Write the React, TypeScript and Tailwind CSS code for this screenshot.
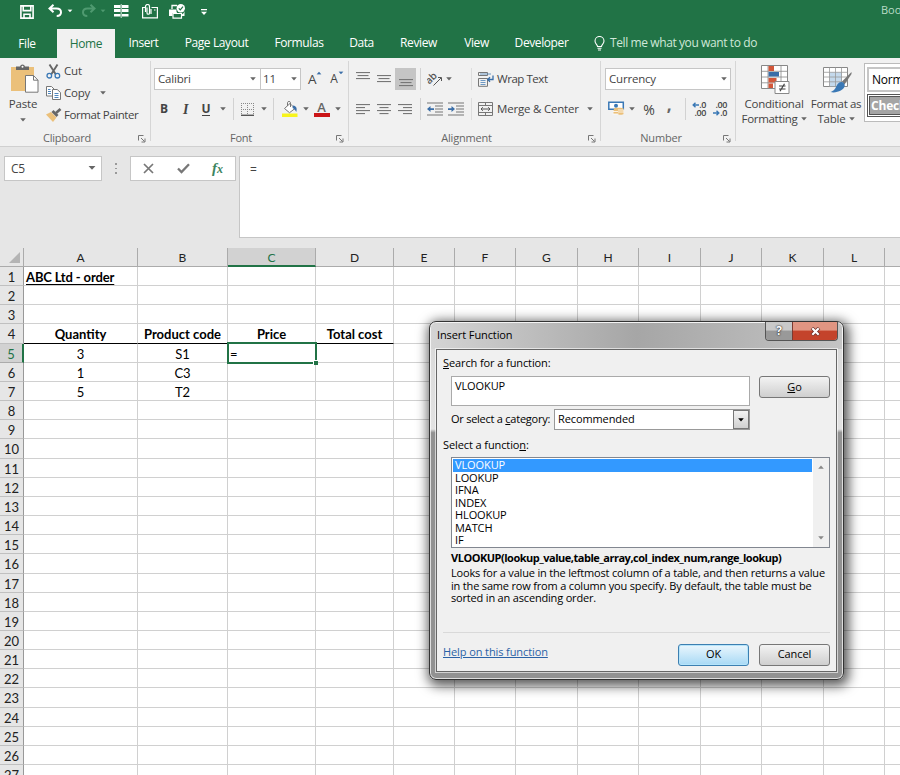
import type { ReactNode } from "react";

// Spreadsheet window: title bar, ribbon, formula bar, grid and the
// Insert Function dialog floating over the cells.

const TABS = [
  { label: "Insert", cls: "w-[57px]" },
  { label: "Page Layout", cls: "w-[89px]" },
  { label: "Formulas", cls: "w-[76px]" },
  { label: "Data", cls: "w-[49px]" },
  { label: "Review", cls: "w-[65px]" },
  { label: "View", cls: "w-[51px]" },
  { label: "Developer", cls: "w-[79px]" },
];

const COLS = ["A", "B", "C", "D", "E", "F", "G", "H", "I", "J", "K", "L", ""];
const GRID =
  "grid grid-rows-[100%] grid-cols-[24px_114px_90px_88px_78px_61px_61px_62px_61px_62px_61px_62px_61px_61px]";

const CELLS: Record<number, string[]> = {
  1: ["ABC Ltd - order"],
  4: ["Quantity", "Product code", "Price", "Total cost"],
  5: ["3", "S1", "="],
  6: ["1", "C3"],
  7: ["5", "T2"],
};

const FUNCTIONS = ["VLOOKUP", "LOOKUP", "IFNA", "INDEX", "HLOOKUP", "MATCH", "IF"];

/* ── small shared pieces ── */

function Caret({ className = "", color = "text-[#666]" }: { className?: string; color?: string }) {
  return (
    <svg width="6" height="4" viewBox="0 0 6 4" className={`shrink-0 ${color} ${className}`}>
      <path d="M.2.3h5.600L3 3.400z" fill="currentColor" />
    </svg>
  );
}

function Slot({ w, children }: { w: string; children?: ReactNode }) {
  return <div className={`flex h-full shrink-0 items-center justify-center ${w}`}>{children}</div>;
}

function Rule() {
  return <div className="h-[22px] w-px shrink-0 bg-[#d2d2d2]" />;
}

function Group({ label, w, children, center = "" }: { label: string; w: string; center?: string; children: ReactNode }) {
  return (
    <section className={`flex h-[88px] shrink-0 flex-col ${w}`}>
      <div className="flex h-[72px] min-w-0">
        <div className="min-w-0 flex-1">{children}</div>
        <div className="mt-[3px] h-[80px] w-px bg-[#d6d6d6]" />
      </div>
      <div className="flex h-[16px] items-center pr-[5px]">
        <span className={`flex-1 text-center text-[11px] text-[#666] ${center}`}>{label}</span>
        <svg width="8" height="8" viewBox="0 0 8 8" fill="none" stroke="#777" className="mt-[2px]">
          <path d="M.5 5.500v-5h5M3 3l3.500 3.500M7 3.500V7H3.500" />
        </svg>
      </div>
    </section>
  );
}

function Lines({ widths, align, top }: { widths: number[]; align: "l" | "c" | "r"; top: number }) {
  return (
    <svg width="14" height="16" viewBox="0 0 14 16" fill="#777">
      {widths.map((w, i) => (
        <rect key={i} x={align === "l" ? 0 : align === "c" ? (14 - w) / 2 : 14 - w} y={top + i * 3} width={w} height="1.1" />
      ))}
    </svg>
  );
}

function Indent({ flip = false }: { flip?: boolean }) {
  return (
    <svg width="16" height="14" viewBox="0 0 16 14">
      <path d="M0 1h16M8 4h8M8 7h8M8 10h8M0 13h16" stroke="#777" strokeWidth="1.1" />
      <path
        d={flip ? "M0 6.200h3.500V4L7 7.100 3.500 10V8H0z" : "M7 6.200H3.500V4L0 7.100 3.500 10V8H7z"}
        fill="#3a6ea8"
      />
    </svg>
  );
}

/* ── title bar ── */

function TitleBar() {
  return (
    <div className="flex h-[28px] items-start text-white [&>*]:shrink-0">
      <svg width="14" height="14" viewBox="0 0 14 14" fill="none" stroke="currentColor" strokeWidth="1.600" className="mt-[5px] ml-[20px]">
        <path d="M.9.9h12.200v12.200H.9zM3.200 1v4.600h7.600V1M4 13V9.200h6V13" />
      </svg>
      <svg width="15" height="14" viewBox="0 0 15 14" fill="none" stroke="currentColor" strokeWidth="2" className="mt-[4px] ml-[14px]">
        <path d="M5.500.8 1.500 4.500l4 3.700M2 4.500h6.500c3 0 4.500 1.500 4.500 3.800 0 2.200-1.400 3.700-4.300 3.700" />
      </svg>
      <Caret color="" className="mt-[9px] ml-[4px] scale-90" />
      <svg width="15" height="14" viewBox="0 0 15 14" fill="none" stroke="#4f9a70" strokeWidth="2" className="mt-[4px] ml-[8px]">
        <path d="m9.500.8 4 3.700-4 3.700M13 4.500H6.500C3.500 4.500 2 6 2 8.300 2 10.500 3.400 12 6.300 12" />
      </svg>
      <Caret color="text-[#4f9a70]" className="mt-[9px] ml-[4px] scale-90" />
      <svg width="15" height="14" viewBox="0 0 15 14" fill="currentColor" className="mt-[4px] ml-[8px]">
        <path d="M0 1h6.500v3H0zM0 5h6.500v3H0zM0 10h6.500v2.500H0zM8 1h6.500v3H8zM8 5h6.500v3H8zM8 10h6.500v2.500H8z" />
        <path d="M7.200 0v14" stroke="currentColor" strokeWidth=".8" />
      </svg>
      <svg width="16" height="15" viewBox="0 0 16 15" fill="none" stroke="currentColor" strokeWidth="1.200" className="mt-[4px] ml-[13px]">
        <path d="M3 3.500H.6v10.300h14.800V3.500H9.500" />
        <path d="M3.500 8V2.500a2 2 0 0 1 4 0V9a1.200 1.200 0 0 1-2.500 0V3.500M9 10V5M12 6h1.500" />
      </svg>
      <svg width="17" height="15" viewBox="0 0 17 15" fill="currentColor" className="mt-[4px] ml-[11px]">
        <path d="M0 5.500h7.500A4 4 0 0 0 15.500 7v5H13V9H3.500v3H0z" />
        <path d="M3 5V1.500h5" fill="none" stroke="currentColor" strokeWidth="1.300" />
        <path d="M4 9.500h8.500v4.700H4z" fill="#217346" stroke="currentColor" strokeWidth="1.200" />
        <circle cx="11.800" cy="4.300" r="4.200" />
        <path d="m9.800 4.300 1.500 1.600L14 2.700" fill="none" stroke="#217346" strokeWidth="1.200" />
      </svg>
      <svg width="6" height="7" viewBox="0 0 6 7" fill="currentColor" className="mt-[9px] ml-[15px]">
        <path d="M0 0h6v1.200H0zM0 2.800h6L3 6z" />
      </svg>
      <span className="mt-[2px] ml-[674px] text-[11px] leading-[15px] whitespace-nowrap text-[#b9dcc6]">Book1</span>
    </div>
  );
}

function TabRow() {
  return (
    <nav className="flex h-[30px] items-center text-[12px] tracking-[-0.4px] whitespace-nowrap text-white">
      <div className="w-[57px] pt-px pr-[3px] text-center">File</div>
      <div className="mt-px flex h-[29px] w-[58px] items-center justify-center bg-[#f1f1f1] text-[#217346]">Home</div>
      <div className="flex">
        {TABS.map((t) => (
          <div key={t.label} className={`text-center ${t.cls}`}>{t.label}</div>
        ))}
      </div>
      <svg width="11" height="15" viewBox="0 0 11 15" fill="none" stroke="currentColor" strokeWidth="1.100" className="ml-[13px]">
        <path d="M3.500 10.500c0-2-2.500-2.500-2.500-5.500a4.500 4.500 0 0 1 9 0c0 3-2.500 3.500-2.500 5.500zM3.500 12.300h4M4 14h3" />
      </svg>
      <span className="ml-[5px] text-[#cfe8d8]">Tell me what you want to do</span>
    </nav>
  );
}

/* ── ribbon ── */

function ClipboardGroup() {
  return (
    <Group label="Clipboard" w="w-[151px]" center="pr-[4px]">
      <div className="flex">
        <div className="flex w-[46px] flex-col items-center pt-[6px]">
          <svg width="28" height="29" viewBox="0 0 28 29" className="ml-[3px]">
            <path d="M0 3h23v24H0z" fill="#ebc07a" />
            <path d="M5 6V2.500h4a2.600 2.600 0 0 1 5 0h4V6z" fill="#666" />
            <circle cx="11.500" cy="2.800" r="1" fill="#fff" />
            <path d="M14.500 11.500h8l4.500 4.700v12H14.500z" fill="#fff" stroke="#777" />
            <path d="M22.500 11.500v4.700H27" fill="none" stroke="#777" />
          </svg>
          <span className="mt-[2px] leading-[18px]">Paste</span>
          <Caret className="mt-[5px]" />
        </div>
        <div className="flex flex-col pt-[2px]">
          <div className="flex h-[22px] items-center">
            <svg width="15" height="15" viewBox="0 0 15 15" fill="none" className="mr-[3px]">
              <path d="m3.500.5 6.200 9.700M11.500.5 5.300 10.200" stroke="#666" strokeWidth="1.900" />
              <circle cx="3.300" cy="11.700" r="2.300" stroke="#3a78b5" strokeWidth="1.300" />
              <circle cx="11.400" cy="11.700" r="2.300" stroke="#3a78b5" strokeWidth="1.300" />
            </svg>
            Cut
          </div>
          <div className="flex h-[22px] items-center">
            <svg width="15" height="14" viewBox="0 0 15 14" fill="#fff" stroke="#777" className="mr-[3px]">
              <path d="M.5.500h5l2.500 2.500v7H.5z" />
              <path d="M6.500 3.500h4.700L14.500 6.500v7h-8z" />
              <path d="M2 3.500h2.500M2 5.500h3M2 7.500h3M8.500 7.500h4M8.500 9.500h4M8.500 11.500h4" stroke="#3a78b5" strokeWidth=".9" />
            </svg>
            Copy
            <Caret className="ml-[10px]" />
          </div>
          <div className="flex h-[22px] items-center tracking-[-0.42px] whitespace-nowrap">
            <svg width="16" height="14" viewBox="0 0 16 14" className="mr-[2px]">
              <path d="m0 6.500 5-2.500 5.500 5.500L7 14z" fill="#ebc07a" />
              <path d="m5.500 4 2-2 5 5-2 2z" fill="#666" />
              <path d="m10 5 4.500-4" stroke="#666" strokeWidth="2.600" />
            </svg>
            Format Painter
          </div>
        </div>
      </div>
    </Group>
  );
}

function FontGroup() {
  return (
    <Group label="Font" w="w-[198px]" center="pr-[5px]">
      <div className="mt-[10px] flex h-[22px] items-center pl-[3px]">
        <div className="flex h-[22px] w-[107px] items-center justify-between border border-[#c6c6c6] bg-white pr-[4px] pl-[3px]">
          Calibri <Caret />
        </div>
        <div className="-ml-px flex h-[22px] w-[41px] items-center justify-between border border-[#c6c6c6] bg-white pr-[3px] pl-[2px]">
          11 <Caret />
        </div>
        <div className="flex pl-[7px] text-[13.500px] leading-[20px] text-[#444]">
          A<Caret color="text-[#3a6ea8]" className="mt-[2px] rotate-180 scale-90" />
        </div>
        <div className="flex pl-[8px] text-[12px] leading-[20px] text-[#444]">
          A<Caret color="text-[#3a6ea8]" className="mt-[2px] scale-90" />
        </div>
      </div>
      <div className="mt-[8px] flex h-[22px] items-center text-[12px]">
        <Slot w="w-[26px]"><b>B</b></Slot>
        <Slot w="w-[17px]"><i className="font-[Liberation_Serif] text-[14px] font-bold">I</i></Slot>
        <Slot w="w-[24px]"><b className="border-b border-[#444] leading-[13px]">U</b></Slot>
        <Slot w="w-[9px]"><Caret /></Slot>
        <Slot w="w-[12px]"><Rule /></Slot>
        <Slot w="w-[17px]">
          <svg width="13" height="13" viewBox="0 0 13 13" fill="none" stroke="#888" strokeDasharray="1 1">
            <path d="M0 .5h13M0 6.500h13M.5 0v13M6.500 0v13M12.500 0v13" />
            <path d="M0 12.300h13" stroke="#555" strokeDasharray="none" strokeWidth="1.400" />
          </svg>
        </Slot>
        <Slot w="w-[15px]"><Caret /></Slot>
        <Slot w="w-[5px]"><Rule /></Slot>
        <Slot w="w-[27px]">
          <svg width="16" height="17" viewBox="0 0 16 17" fill="none">
            <path d="M0 12.500h15.500v3.500H0z" fill="#f7f41c" />
            <path d="m8 2.500 5 5-5.500 4.200L2.500 7.500z" fill="#fff" stroke="#777" />
            <path d="M5.500 5V1.500a1.600 1.600 0 0 1 3 0V6" stroke="#777" />
            <path d="M11 4.500c3 .3 4.500 2.500 3.300 6.500-1-2-1.800-3-3.800-4z" fill="#3a6ea8" />
          </svg>
        </Slot>
        <Slot w="w-[5px]"><Caret /></Slot>
        <Slot w="w-[27px]">
          <span className="flex w-[16px] flex-col items-center text-[13px] leading-[13px] font-semibold text-[#666]">
            A<i className="-mt-px h-[4px] w-[16px] bg-[#cb1517]" />
          </span>
        </Slot>
        <Slot w="w-[6px]"><Caret /></Slot>
      </div>
    </Group>
  );
}

function AlignmentGroup() {
  return (
    <Group label="Alignment" w="w-[252px]" center="pr-[4px]">
      <div className="mt-[10px] flex h-[22px] items-center">
        <Slot w="w-[28px]"><Lines widths={[14, 11, 14]} align="c" top={1} /></Slot>
        <Slot w="w-[14px]"><Lines widths={[14, 11, 14]} align="c" top={4} /></Slot>
        <div className="ml-[4px] flex h-[22px] w-[21px] items-center justify-center bg-[#c5c5c5]">
          <Lines widths={[14, 11, 14]} align="c" top={8} />
        </div>
        <Slot w="w-[8px]"><Rule /></Slot>
        <Slot w="w-[22px]">
          <svg width="16" height="16" viewBox="0 0 16 16" fill="none" stroke="#555">
            <text x="-1" y="10" transform="rotate(-45 5 8)" fontSize="10" fontWeight="600" fill="#555" stroke="none">ab</text>
            <path d="m6.500 14.500 7.500-7.500M11 6.500h3.500V10" />
          </svg>
        </Slot>
        <Slot w="w-[6px]"><Caret /></Slot>
        <Slot w="w-[35px]"><div className="ml-[3px] h-[22px] w-px bg-[#ddd]" /></Slot>
        <svg width="16" height="15" viewBox="0 0 16 15" fill="none" stroke="#777" className="mr-[3px] -ml-[9px]">
          <path d="M.5.500h9v3h-9zM.5 6.500h9v7.800h-9z" />
          <path d="M2.500 8.500h5M2.500 10.500h5M2.500 12.500h5M2 2h11" stroke="#5f8fbe" strokeWidth=".9" />
          <path d="M15 3.500v4h-5M12 5.200 9.700 7.500l2.300 2.300" stroke="#3a6ea8" strokeWidth="1.300" />
        </svg>
        <span className="tracking-[-0.45px] whitespace-nowrap">Wrap Text</span>
      </div>
      <div className="mt-[8px] flex h-[22px] items-center">
        <Slot w="w-[28px]"><Lines widths={[14, 9, 14, 9]} align="l" top={3} /></Slot>
        <Slot w="w-[14px]"><Lines widths={[14, 9, 14, 9]} align="c" top={3} /></Slot>
        <Slot w="w-[28px]"><Lines widths={[14, 9, 14, 9]} align="r" top={3} /></Slot>
        <Slot w="w-[3px]"><Rule /></Slot>
        <Slot w="w-[26px]"><Indent /></Slot>
        <Slot w="w-[16px]"><Indent flip /></Slot>
        <Slot w="w-[14px]"><div className="h-[22px] w-px bg-[#ddd]" /></Slot>
        <svg width="15" height="14" viewBox="0 0 15 14" fill="none" stroke="#777" className="mr-[4px]">
          <path d="M.5.500h14v13H.5zM.5 3.500h14M.5 10.500h14M7.500.5v3M7.500 10.500v3" />
          <path d="M3 7h9M4.800 5.200 3 7l1.800 1.800M10.200 5.200 12 7l-1.800 1.800" stroke="#555" />
        </svg>
        <span className="whitespace-nowrap">Merge &amp; Center</span>
        <Caret className="ml-[8px]" />
      </div>
    </Group>
  );
}

function NumberGroup() {
  return (
    <Group label="Number" w="w-[135px]" center="pr-[2px]">
      <div className="mt-[10px] ml-[4px] flex h-[22px] w-[126px] items-center justify-between border border-[#c6c6c6] bg-white pr-[3px] pl-[3px]">
        Currency <Caret />
      </div>
      <div className="mt-[8px] flex h-[22px] items-center">
        <svg width="17" height="16" viewBox="0 0 17 16" className="ml-[7px]">
          <path d="M.8 1.200h14.500v7H.8z" fill="#fff" stroke="#3a78b5" strokeWidth="1.500" />
          <circle cx="8" cy="4.700" r="2" fill="#3a78b5" />
          <path d="M6 7.500c0-1 9.500-1 9.500 0V13c0 1-6 1-6 0h-4v-3z" fill="#ebc07a" />
          <path d="M5 10.500h5M10 9h6M10 11h6M4.500 13h6" stroke="#fff" strokeWidth=".8" />
        </svg>
        <Slot w="w-[14px]"><Caret /></Slot>
        <Slot w="w-[20px]"><span className="text-[14px]">%</span></Slot>
        <Slot w="w-[20px]"><b className="-mt-[9px] text-[17px] leading-[14px] text-[#666] not-italic">,</b></Slot>
        <Slot w="w-[12px]"><Rule /></Slot>
        <div className="w-[15px] text-[9px] leading-[8px] font-semibold tracking-[-0.4px]">
          <div className="flex items-center justify-end">
            <svg width="7" height="6" viewBox="0 0 7 6"><path d="M7 3H2M3.500.8 1.200 3l2.300 2.200" fill="none" stroke="#3a78b5" strokeWidth="1.400" /></svg>.0
          </div>
          <div className="text-right">.00</div>
        </div>
        <div className="ml-[6px] w-[15px] text-[9px] leading-[8px] font-semibold tracking-[-0.4px]">
          <div className="text-right">.00</div>
          <div className="flex items-center justify-end">
            <svg width="7" height="6" viewBox="0 0 7 6"><path d="M0 3h5M3.500.8 5.800 3 3.500 5.200" fill="none" stroke="#3a78b5" strokeWidth="1.400" /></svg>.0
          </div>
        </div>
      </div>
    </Group>
  );
}

function StylesGroup() {
  return (
    <section className="flex min-w-0 flex-1 overflow-hidden">
      <div className="flex w-[76px] shrink-0 flex-col items-center pt-[7px] leading-[15px]">
        <svg width="29" height="29" viewBox="0 0 29 29" className="mb-[2px] ml-[2px]">
          <path d="M.5.500h26v23H.5z" fill="#fff" stroke="#888" />
          <path d="M.5 6.300h26M.5 12h26M.5 17.800h26M7 .5v23M20 .5v23" stroke="#888" strokeWidth=".8" />
          <path d="M7.500 1H13v5H7.500zM7.500 13h8v4.500h-8zM7.500 18.500h4.500V23H7.500z" fill="#d2573a" />
          <path d="M7.500 7H18v4.500H7.500z" fill="#3a6ea8" />
          <path d="M14 16.500h14v12H14z" fill="#fff" stroke="#888" />
          <path d="M18 21h6.500M18 24h6.500M23.500 18.800 19 26.200" stroke="#444" strokeWidth="1.200" />
        </svg>
        <span>Conditional</span>
        <span className="flex items-center gap-[3px] tracking-[-0.3px]">Formatting <Caret /></span>
      </div>
      <div className="flex w-[48px] shrink-0 flex-col items-center pt-[7px] leading-[15px] whitespace-nowrap">
        <svg width="29" height="29" viewBox="0 0 29 29" className="mb-[2px] ml-[2px]">
          <path d="M.5 2.500h24v19H.5z" fill="#fff" stroke="#888" />
          <path d="M6.500 7.300h12.500v14H6.500z" fill="#c4d9ec" />
          <path d="M.5 7.300h24M.5 12h24M.5 16.800h24M6.500 2.500v19M12.500 2.500v19M18.500 2.500v19" stroke="#999" strokeWidth=".8" />
          <path d="m28.500 7-9.500 9.500 2.500 3L28.500 9z" fill="#777" />
          <path d="M18.500 17c2 0 3.500 1.800 3.200 3.800C21 25.500 13 28.500 7.500 27c4-1.500 4.500-3 6-6 1-2 2.500-4 5-4z" fill="#3a78b5" />
        </svg>
        <span className="tracking-[-0.35px]">Format as</span>
        <span className="flex items-center gap-[3px]">Table <Caret /></span>
      </div>
      <div className="mt-[5px] ml-[4px] h-[59px] w-[60px] shrink-0 border border-[#bbb] bg-white pt-[3px] pl-[2px]">
        <div className="flex h-[25px] w-[70px] items-center border-2 border-[#c6c6c6] pl-[3px] text-[12px] text-black">Normal</div>
        <div className="mt-[2px] w-[70px] border border-[#555] p-px">
          <div className="flex h-[19px] items-center border border-[#555] bg-[#a5a5a5] pl-px text-[12px] font-bold text-white">Check Cell</div>
        </div>
      </div>
    </section>
  );
}

/* ── formula bar ── */

function FormulaBar() {
  return (
    <div className="flex h-[101px] bg-[#e6e6e6] pt-[9px] text-[#444]">
      <div className="ml-[4px] flex h-[25px] w-[98px] items-center justify-between border border-[#c6c6c6] bg-white pr-[6px] pl-[6px] text-[12px] tracking-[-0.3px]">
        C5 <Caret className="mb-[2px] scale-125" />
      </div>
      <div className="flex h-[25px] w-[28px] flex-col items-center justify-center gap-[3px]">
        <i className="size-[1.500px] bg-[#999]" />
        <i className="size-[1.500px] bg-[#999]" />
        <i className="size-[1.500px] bg-[#999]" />
      </div>
      <div className="flex h-[25px] w-[106px] items-center border border-[#c6c6c6] bg-white">
        <svg width="11" height="11" viewBox="0 0 11 11" fill="none" stroke="#777" strokeWidth="1.700" className="ml-[12px]">
          <path d="m1 1 9 9M10 1l-9 9" />
        </svg>
        <svg width="13" height="11" viewBox="0 0 13 11" fill="none" stroke="#777" strokeWidth="2.300" className="ml-[23px]">
          <path d="m1 5.500 3.500 3.500L12 1.200" />
        </svg>
        <span className="ml-[22px] font-[Liberation_Serif] text-[15px] leading-[16px] font-bold text-[#3c8560] italic">
          f<span className="text-[12px]">x</span>
        </span>
      </div>
      <div className="ml-[3px] h-[82px] flex-1 border border-r-0 border-[#c6c6c6] bg-white pt-[4px] pl-[10px] text-[12px]">=</div>
    </div>
  );
}

/* ── sheet ── */

function Sheet() {
  return (
    <div className="w-[945px] font-[Lato,Carlito,sans-serif] text-[13px] text-black">
      <div className={`${GRID} h-[19px]`}>
        <div className="flex items-end justify-end border-r border-b border-[#ababab] bg-[#e6e6e6] pr-[3px] pb-[3px]">
          <svg width="11" height="11" viewBox="0 0 11 11"><path d="M11 0v11H0z" fill="#b4b4b4" /></svg>
        </div>
        {COLS.map((c, i) => (
          <div
            key={i}
            className={
              c === "C"
                ? "border-r border-b-2 border-r-[#ababab] border-b-[#217346] bg-[#d2d2d2] text-center text-[12px] leading-[19px] text-[#217346]"
                : "border-r border-b border-[#ababab] bg-[#e6e6e6] text-center text-[12px] leading-[19px] text-[#222]"
            }
          >
            {c}
          </div>
        ))}
      </div>
      {Array.from({ length: 27 }, (_, i) => i + 1).map((row) => (
        <div key={row} className={`${GRID} h-[19.170px]`}>
          <div
            className={
              row === 5
                ? "border-r-2 border-b border-r-[#217346] border-b-[#ababab] bg-[#d2d2d2] text-center leading-[21px] text-[#217346]"
                : "border-r border-b border-r-[#999] border-b-[#c0c0c0] bg-[#e6e6e6] text-center leading-[21px] text-[#222]"
            }
          >
            {row}
          </div>
          {COLS.map((_, c) => {
            const text = CELLS[row]?.[c];
            const line = row === 4 && c < 4 ? "border-b-black" : "border-b-[#d0d0d0]";
            const face = row === 1 || row === 4 ? "font-bold" : "";
            const side = row === 1 ? "pl-[2px] text-left tracking-[-0.13px]" : "text-center";
            return (
              <div key={c} className={`relative border-r border-b border-r-[#d0d0d0] leading-[21px] whitespace-nowrap ${line} ${face} ${side}`}>
                {row === 5 && c === 2 ? (
                  <div className="absolute -top-[2px] -right-[2px] -bottom-[2px] -left-px z-10 border-2 border-[#217346] pl-px text-left leading-[20px]">
                    {text}
                    <i className="absolute -right-[3px] -bottom-[3px] size-[5px] border-t border-l border-white bg-[#217346]" />
                  </div>
                ) : row === 1 && text ? (
                  <span className="underline decoration-1 underline-offset-2">{text}</span>
                ) : (
                  text
                )}
              </div>
            );
          })}
        </div>
      ))}
    </div>
  );
}

/* ── dialog ── */

const BUTTON = "flex h-[22px] w-[71px] items-center justify-center rounded-[3px] border bg-linear-to-b";

function InsertFunctionDialog() {
  return (
    <div className="absolute top-[321px] left-[429px] z-20 flex h-[359px] w-[415px] flex-col rounded-[7px] border-[1.500px] border-[#333] bg-linear-to-b from-[#d8d8d8] from-0% via-[#e2e2e2] via-[30%] to-[#929292] to-[31%] px-[6px] pb-[7px] text-[11px] tracking-[-0.1px] text-black shadow-[2px_3px_12px_3px_rgba(0,0,0,0.65),inset_0_0_0_1px_rgba(255,255,255,0.7)]">
      <div className="-mx-[5px] mt-px flex h-[26px] shrink-0 justify-between rounded-t-[5px] bg-linear-to-r from-[#d4d4d4] via-[#a6a6a6] via-50% to-[#c4c4c4] pl-[6px]">
        <span className="pt-[4px] leading-[15px]">Insert Function</span>
        <div className="mr-[4px] -mt-px flex h-[19px] rounded-b-[4px] border border-t-0 border-[#555] text-[12px] font-bold text-white">
          <div className="flex w-[26px] items-center justify-center rounded-bl-[3px] bg-linear-to-b from-[#c9c9c9] from-45% to-[#999] to-50% [text-shadow:0_0_2px_#222,0_0_1px_#222]">?</div>
          <div className="flex w-[45px] items-center justify-center rounded-br-[3px] border-l border-[#7c3a30] bg-linear-to-b from-[#e09582] from-45% to-[#c4432b] to-50%">
            <svg width="11" height="9" viewBox="0 0 11 9" fill="none">
              <path d="m2 1 7 7M9 1 2 8" stroke="#6b2d26" strokeWidth="3.600" />
              <path d="m2.300 1.300 6.400 6.400M8.700 1.300 2.300 7.700" stroke="#fff" strokeWidth="2.200" />
            </svg>
          </div>
        </div>
      </div>

      <div className="flex min-h-0 flex-1 flex-col border border-[#666] bg-[#f0f0f0] px-[6px] shadow-[0_0_0_1px_rgba(255,255,255,0.6)]">
        <div className="mt-[5px] leading-[15px]"><u>S</u>earch for a function:</div>
        <div className="mt-[6px] ml-[8px] flex justify-between">
          <div className="h-[30px] w-[299px] border border-[#aaa] bg-white pl-[3px] leading-[17px]">VLOOKUP</div>
          <button className={`${BUTTON} border-[#777] from-[#f3f3f3] to-[#cfcfcf]`}><u>G</u>o</button>
        </div>
        <div className="mt-[3px] ml-[8px] flex h-[21px] items-center">
          <span className="w-[103px] tracking-[-0.25px] whitespace-nowrap">Or select a <u>c</u>ategory:</span>
          <div className="flex h-[21px] w-[196px] items-center justify-between border border-[#999] bg-white pl-[3px]">
            Recommended
            <div className="flex h-[19px] w-[16px] items-center justify-center border border-[#777] bg-linear-to-b from-[#f3f3f3] to-[#d0d0d0]">
              <Caret color="text-black" />
            </div>
          </div>
        </div>
        <div className="mt-[7px] leading-[15px]">Select a functio<u>n</u>:</div>
        <div className="mt-[5px] ml-[8px] flex h-[91px] shrink-0 border border-[#828790] bg-white">
          <ul className="flex-1 overflow-hidden pt-px pl-px">
            {FUNCTIONS.map((name, i) => (
              <li key={name} className={`h-[12.500px] pl-[2px] leading-[12.500px] ${i === 0 ? "bg-[#3399ff] text-white" : ""}`}>
                {name}
              </li>
            ))}
          </ul>
          <div className="ml-px flex w-[16px] flex-col items-center justify-between bg-[#f0f0f0] py-[7px]">
            <Caret color="text-[#888]" className="rotate-180" />
            <Caret color="text-[#888]" />
          </div>
        </div>
        <div className="mt-[3px] ml-[8px] leading-[14px] font-bold tracking-[-0.49px] whitespace-nowrap">
          VLOOKUP(lookup_value,table_array,col_index_num,range_lookup)
        </div>
        <div className="mt-[2px] ml-[8px] leading-[12.500px] tracking-[-0.18px] whitespace-nowrap">
          Looks for a value in the leftmost column of a table, and then returns a value
          <br />
          in the same row from a column you specify. By default, the table must be
          <br />
          sorted in an ascending order.
        </div>
        <div className="mt-[27px] h-px bg-[#d9d9d9]" />
        <div className="mt-[11px] flex items-start justify-between">
          <a className="leading-[15px] text-[#2a62a6] underline">Help on this function</a>
          <div className="flex gap-[10px]">
            <button className={`${BUTTON} border-[#3c7fb1] from-[#eaf6fd] to-[#a7d9f5] shadow-[inset_0_0_0_1px_#b5e4fa]`}>OK</button>
            <button className={`${BUTTON} border-[#777] from-[#f3f3f3] to-[#cfcfcf]`}>Cancel</button>
          </div>
        </div>
      </div>
    </div>
  );
}

export default function App() {
  return (
    <div className="relative h-[775px] w-[900px] overflow-hidden bg-white font-[Open_Sans,Noto_Sans,sans-serif]">
      <header className="overflow-hidden bg-[#217346]">
        <TitleBar />
        <TabRow />
      </header>
      <div className="flex h-[89px] border-b border-[#d0d0d0] bg-[#f1f1f1] text-[11.500px] tracking-[-0.2px] text-[#444]">
        <ClipboardGroup />
        <FontGroup />
        <AlignmentGroup />
        <NumberGroup />
        <StylesGroup />
      </div>
      <FormulaBar />
      <Sheet />
      <InsertFunctionDialog />
    </div>
  );
}
